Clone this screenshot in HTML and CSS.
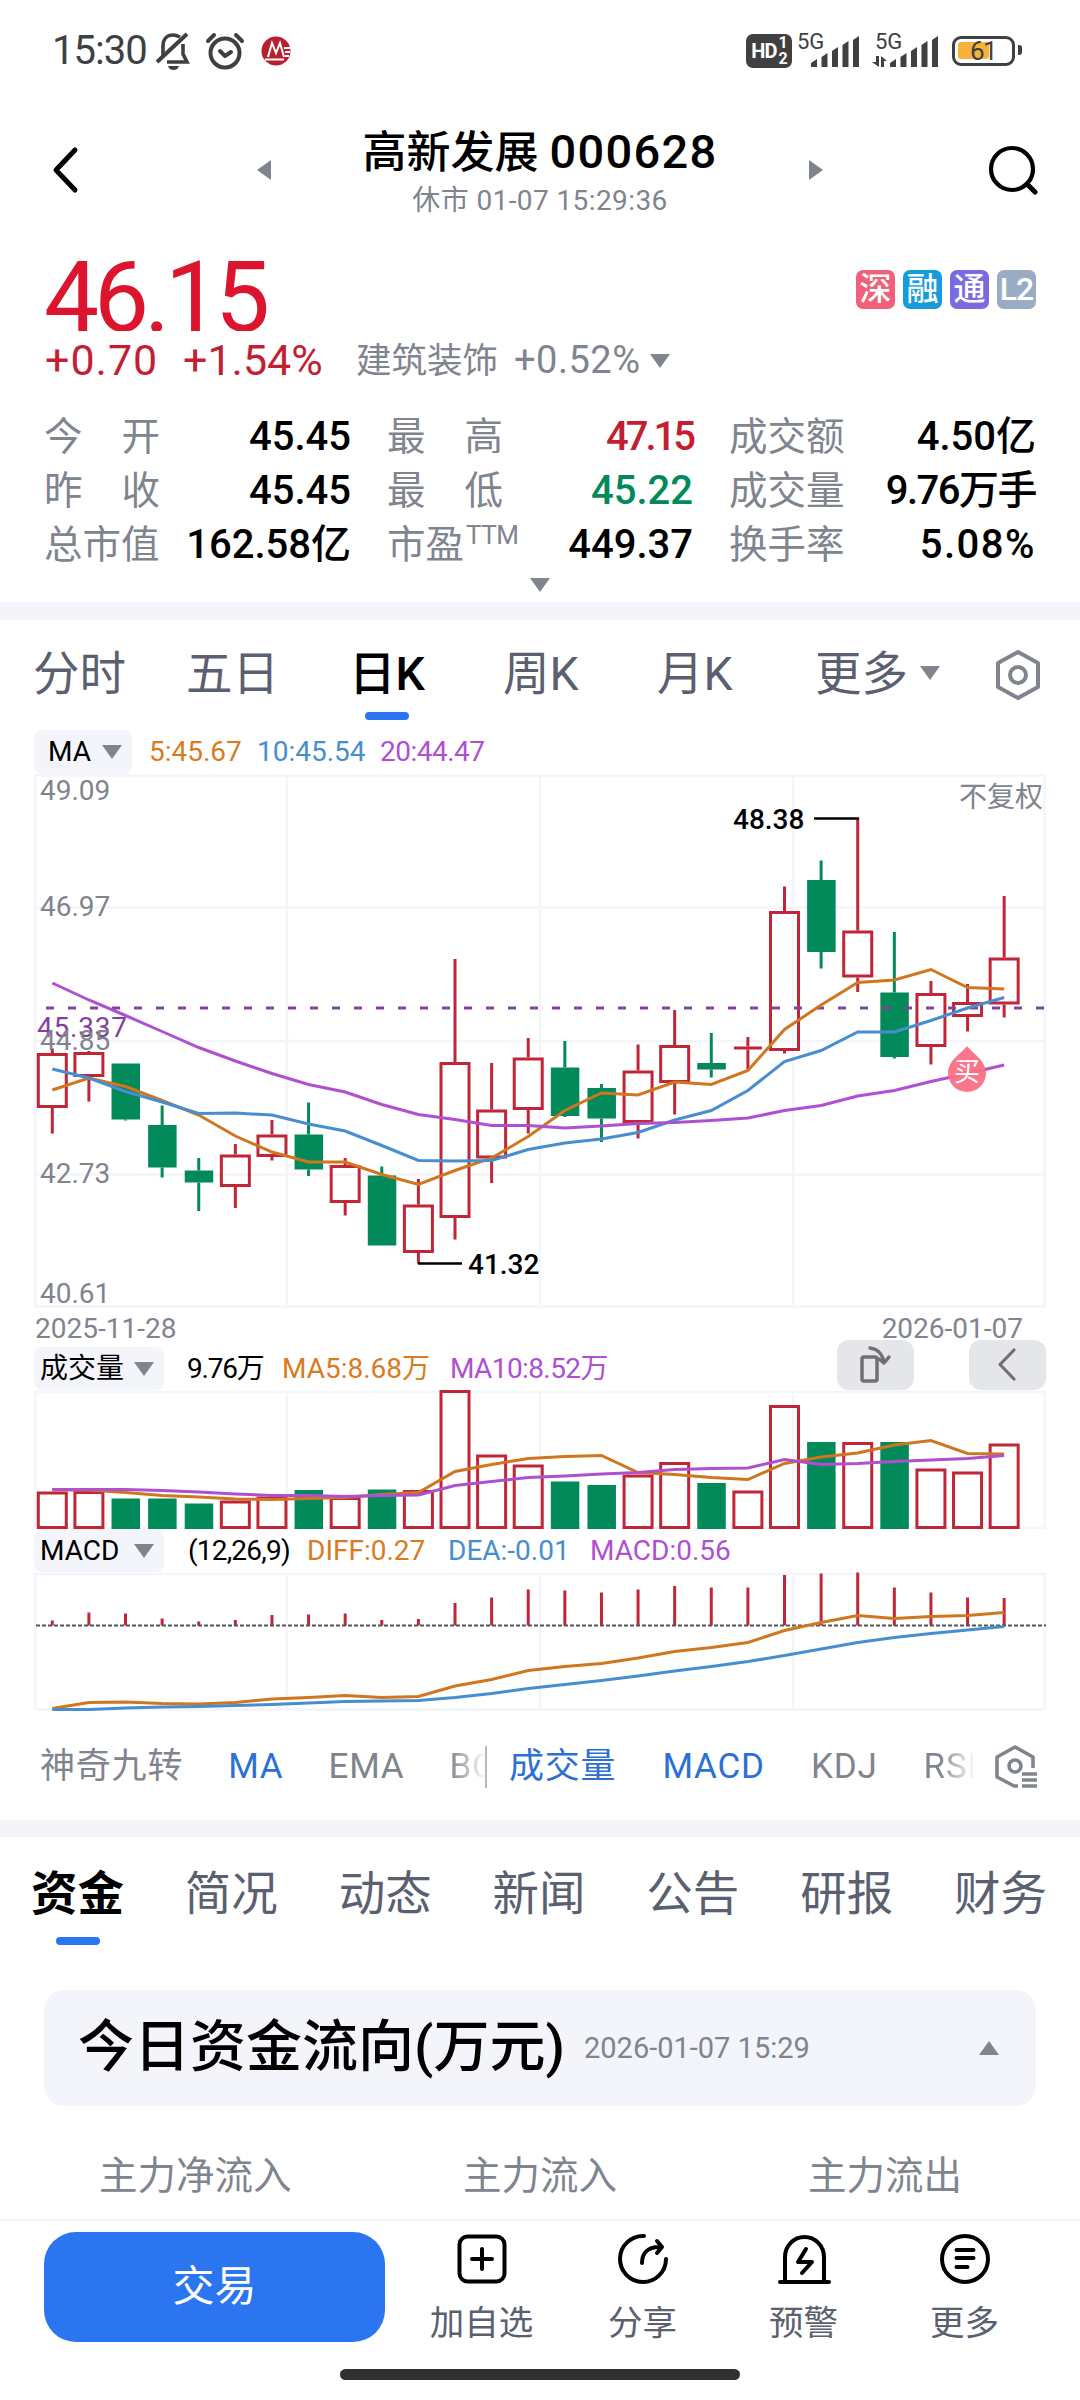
FILE: index.html
```html
<!DOCTYPE html>
<html lang="zh-CN">
<head>
    <meta charset="UTF-8">
    <meta name="viewport" content="width=device-width, initial-scale=1.0">
    <title>高新发展 000628</title>
    <link rel="stylesheet" href="styles.css">
</head>
<body>
    <div class="status-bar">
        <span class="clock">15:30</span>
        <svg class="ico-bell" width="36" height="40" viewBox="0 0 36 40" fill="none" stroke="#404040" stroke-width="3.6">
            <path d="M8 25V15C8 8 12 4 18 4c3 0 5 1 7 2M28 13v10l4 8H12"/>
            <path d="M2 31L32 3" stroke-width="4"/>
            <path d="M13 35h11c-1 3-3 4-5.500 4s-4.500-1-5.500-4z" fill="#404040" stroke="none"/>
        </svg>
        <svg class="ico-alarm" width="40" height="40" viewBox="0 0 40 40" fill="none" stroke="#404040" stroke-width="4" stroke-linecap="round" stroke-linejoin="round">
            <circle cx="20" cy="22" r="14.500"/>
            <path d="M15 20l5 5 6-4M3 10l6-6M37 10l-6-6"/>
        </svg>
        <svg class="ico-bank" width="32" height="32" viewBox="0 0 32 32">
            <circle cx="16" cy="16" r="14.500" fill="#b8202f"/>
            <path d="M8 22L12 8l4 10 4-10 4 14M5 24.500h19M24 13h6M25 17h5M25 21h4" fill="none" stroke="#fff" stroke-width="2"/>
        </svg>
        <div class="status-right">
            <div class="hd">HD<span>1<br>2</span></div>
            <div class="signal first"><span>5G</span>
                <svg width="62" height="34" viewBox="0 0 62 34" fill="#404040">
                    <path d="M14 33v-4l6-4v8zM24.500 33V23l6-4v14zM35 33V17l6-4v20zM45.500 33V11l6-4v26zM56 33V6l6-4v31z"/>
                </svg>
            </div>
            <div class="signal second"><span>5G</span>
                <svg width="66" height="34" viewBox="0 0 66 34" fill="#404040">
                    <path d="M18 33v-4l6-4v8zM28.500 33V23l6-4v14zM39 33V17l6-4v20zM49.500 33V11l6-4v26zM60 33V6l6-4v31z"/>
                    <path d="M0 28l7 5V22H4v6zM15 27l-6-5v11h3v-6z"/>
                </svg>
            </div>
            <div class="battery"><i></i><span>61</span></div>
        </div>
    </div>

    <div class="header">
        <svg width="30" height="50" viewBox="0 0 30 50" fill="none" stroke="#000" stroke-width="5" stroke-linecap="round" stroke-linejoin="round"><path d="M25 5L6 25l19 20"/></svg>
        <span class="tri-left"></span>
        <div class="title">
            <h1>高新发展 <b>000628</b></h1>
            <p>休市 01-07 15:29:36</p>
        </div>
        <span class="tri-right"></span>
        <svg width="50" height="50" viewBox="0 0 50 50" fill="none" stroke="#000" stroke-width="4.200" stroke-linecap="round"><circle cx="24" cy="24" r="21"/><path d="M39 39l8 8" stroke-width="5"/></svg>
    </div>

    <div class="quote">
        <div class="price-row">
            <div class="price">46.15</div>
            <div class="tags">
                <span class="tag-sz">深</span><span class="tag-rz">融</span><span class="tag-tong">通</span><span class="tag-l2">L2</span>
            </div>
        </div>
        <div class="change-row">
            <span class="chg">+0.70</span><span class="chg pct">+1.54%</span>
            <span class="sector">建筑装饰</span><span class="sector-chg">+0.52%</span><i class="tri-down"></i>
        </div>
        <div class="stats">
            <div><label><span>今</span><span>开</span></label><b>45.45</b></div>
            <div><label><span>最</span><span>高</span></label><b class="up">47.15</b></div>
            <div><label>成交额</label><b>4.50亿</b></div>
            <div><label><span>昨</span><span>收</span></label><b>45.45</b></div>
            <div><label><span>最</span><span>低</span></label><b class="down">45.22</b></div>
            <div><label>成交量</label><b class="tight">9.76万手</b></div>
            <div><label>总市值</label><b>162.58亿</b></div>
            <div><label class="pe">市盈<sup>TTM</sup></label><b>449.37</b></div>
            <div><label>换手率</label><b class="loose">5.08%</b></div>
        </div>
        <i class="tri-down expand"></i>
    </div>

    <div class="divider first-divider"></div>

    <div class="period-tabs">
        <span>分时</span><span>五日</span><span><em class="active">日K</em></span><span>周K</span><span>月K</span>
        <span>更多<i class="tri-down"></i></span>
        <svg width="48" height="52" viewBox="0 0 48 52" fill="none" stroke="#80848f" stroke-width="4" stroke-linejoin="round"><path d="M24 3L44 14v24L24 49 4 38V14z"/><circle cx="24" cy="26" r="8"/></svg>
    </div>

    <div class="legend ma-legend">
        <span class="chip">MA<i class="tri-down"></i></span>
        <span class="orange">5:45.67</span><span class="blue">10:45.54</span><span class="purple">20:44.47</span>
    </div>
    <svg id="kline" class="chart" width="1080" height="536" viewBox="0 0 1080 536"></svg>
    <div class="dates"><span>2025-11-28</span><span>2026-01-07</span></div>
    <div class="legend vol-legend">
        <span class="chip">成交量<i class="tri-down"></i></span>
        <span class="vol">9.76万</span><span class="orange">MA5:8.68万</span><span class="purple">MA10:8.52万</span>
        <div class="chart-tools">
            <button><svg width="34" height="40" viewBox="0 0 34 40" fill="none" stroke="#707070" stroke-width="3.500" stroke-linecap="round" stroke-linejoin="round"><rect x="3" y="12" width="15" height="24" rx="2"/><path d="M11 3c8 1 13 7 14 15M20 14l5 4 5-6"/></svg></button>
            <button><svg width="34" height="40" viewBox="0 0 34 40" fill="none" stroke="#707070" stroke-width="3.200" stroke-linecap="round" stroke-linejoin="round"><path d="M23 5L9 19.500 23 34"/></svg></button>
        </div>
    </div>
    <svg id="volume" class="chart" width="1080" height="139" viewBox="0 0 1080 139"></svg>
    <div class="legend macd-legend">
        <span class="chip">MACD<i class="tri-down"></i></span>
        <span class="params">(12,26,9)</span><span class="orange">DIFF:0.27</span><span class="blue">DEA:-0.01</span><span class="purple">MACD:0.56</span>
    </div>
    <svg id="macd" class="chart" width="1080" height="139" viewBox="0 0 1080 139"></svg>

    <div class="indicators">
        <div class="main-ind"><span>神奇九转</span><span class="on">MA</span><span>EMA</span><span>BOLL</span></div>
        <div class="sub-ind"><span class="on">成交量</span><span class="on">MACD</span><span>KDJ</span><span>RSI</span></div>
        <svg width="46" height="46" viewBox="0 0 46 46" fill="none" stroke="#80848f" stroke-width="3.600" stroke-linejoin="round"><path d="M40 24V13L22 3 4 13v20l17 9h4"/><circle cx="22" cy="22" r="6"/><path d="M29 30h15M29 36h15M29 42h15"/></svg>
    </div>

    <div class="divider"></div>

    <div class="info-tabs">
        <span class="active">资金</span><span>简况</span><span>动态</span><span>新闻</span><span>公告</span><span>研报</span><span>财务</span>
    </div>

    <div class="flow-card">
        <h2>今日资金流向(万元)</h2>
        <span>2026-01-07 15:29</span>
        <i class="tri-up"></i>
    </div>
    <div class="flow-cols">
        <span>主力净流入</span><span>主力流入</span><span>主力流出</span>
    </div>

    <div class="bottom-bar">
        <button class="trade">交易</button>
        <div class="action">
            <svg width="54" height="54" viewBox="0 0 54 54"><rect x="4.500" y="4.500" width="45" height="45" rx="8"/><path d="M27 17v20M17 27h20"/></svg>
            <span>加自选</span>
        </div>
        <div class="action">
            <svg width="54" height="54" viewBox="0 0 54 54"><path d="M28 4A23 23 0 1 0 50 27M26 31c0-9 5-16 17-16M41 9l5 6-5 6"/></svg>
            <span>分享</span>
        </div>
        <div class="action">
            <svg width="54" height="54" viewBox="0 0 54 54"><path d="M8 49V25a19.500 20 0 0 1 39 0v24M3 50h49M29 17l-8 13h14L25 41"/></svg>
            <span>预警</span>
        </div>
        <div class="action">
            <svg width="54" height="54" viewBox="0 0 54 54"><circle cx="27" cy="27" r="23"/><path d="M18.500 18h17M18.500 26h17M18.500 35h11"/></svg>
            <span>更多</span>
        </div>
    </div>
    <div class="home-bar"></div>

    <script src="script.js"></script>
</body>
</html>
```

FILE: styles.css
```css
* {
    box-sizing: border-box;
}
body {
    margin: 0;
    width: 1080px;
    height: 2400px;
    overflow: hidden;
    background: #fff;
    color: #000;
    font-family: Roboto, 'Noto Sans CJK SC', sans-serif;
    line-height: 1.2;
    display: flex;
    flex-direction: column;
}
body > * {
    flex-shrink: 0;
}
h1, h2, p {
    margin: 0;
}
em {
    font-style: normal;
}
svg {
    display: block;
    flex-shrink: 0;
}
button {
    border: none;
    padding: 0;
    font-family: inherit;
    line-height: inherit;
}

/* triangles */
.tri-down {
    display: inline-block;
    border-left: 10px solid transparent;
    border-right: 10px solid transparent;
    border-top: 14px solid #80848f;
}
.tri-up {
    border-left: 10px solid transparent;
    border-right: 10px solid transparent;
    border-bottom: 14px solid #80848f;
}
.tri-left {
    border-top: 10px solid transparent;
    border-bottom: 10px solid transparent;
    border-right: 14px solid #80848f;
}
.tri-right {
    border-top: 10px solid transparent;
    border-bottom: 10px solid transparent;
    border-left: 14px solid #80848f;
}

/* status bar */
.status-bar {
    height: 102px;
    padding: 0 59px 0 52px;
    display: flex;
    align-items: center;
    color: #404040;
}
.clock {
    width: 103px;
    font-size: 40px;
    letter-spacing: -1px;
}
.ico-alarm {
    margin-left: 14px;
}
.ico-bank {
    margin-left: 15px;
}
.status-right {
    margin-left: auto;
    display: flex;
    align-items: center;
}
.hd {
    width: 46px;
    height: 34px;
    border-radius: 7px;
    background: #404040;
    color: #fff;
    font-size: 20px;
    font-weight: bold;
    display: flex;
    align-items: center;
    justify-content: center;
    letter-spacing: -1px;
}
.hd span {
    font-size: 16px;
    line-height: 16px;
    margin-left: 2px;
}
.signal {
    position: relative;
    width: 62px;
    height: 34px;
}
.signal span {
    position: absolute;
    left: 0;
    top: -4px;
    font-size: 22px;
    line-height: 24px;
}
.first {
    margin-left: 5px;
}
.second {
    width: 66px;
    margin-left: 13px;
}
.second span {
    left: 3px;
}
.battery {
    position: relative;
    width: 63px;
    height: 30px;
    margin: 0 6px 0 14px;
    border: 3.5px solid #404040;
    border-radius: 9px;
    padding: 3px;
}
.battery i {
    display: block;
    width: 31px;
    height: 17px;
    border-radius: 3px;
    background: #f7b23c;
}
.battery span {
    position: absolute;
    left: 15px;
    top: -3px;
    font-size: 26px;
    line-height: 30px;
    letter-spacing: -1.5px;
}
.battery::after {
    content: '';
    position: absolute;
    right: -10px;
    top: 6px;
    width: 4px;
    height: 10px;
    border-radius: 0 3px 3px 0;
    background: #404040;
}

/* header */
.header {
    height: 142px;
    padding: 0 42px 6px 50px;
    display: flex;
    align-items: center;
}
.header .tri-left {
    margin-left: 177px;
}
.title {
    width: 538px;
    text-align: center;
    padding-top: 6px;
}
.title h1 {
    font-size: 44px;
    font-weight: 500;
    line-height: 54px;
    white-space: nowrap;
}
.title b {
    font-size: 47px;
    font-weight: 500;
    letter-spacing: 1.3px;
}
.title p {
    font-size: 28px;
    line-height: 42px;
    letter-spacing: 0.4px;
    color: #80848f;
}
.header svg:last-child {
    margin-left: auto;
}

/* quote */
.quote {
    height: 358px;
    padding: 0 44px;
    display: flex;
    flex-direction: column;
}
.price-row {
    height: 87px;
    display: flex;
    justify-content: space-between;
    overflow: hidden;
}
.price {
    font-size: 98px;
    line-height: 108px;
    color: #dc142d;
    letter-spacing: -5px;
}
.tags {
    display: flex;
    gap: 8px;
    padding-top: 26px;
}
.tags span {
    width: 39px;
    height: 39px;
    border-radius: 7px;
    color: #fff;
    font-size: 32px;
    font-weight: 500;
    line-height: 39px;
    text-align: center;
}
.tags .tag-sz {
    background: #f0607a;
}
.tags .tag-rz {
    background: #169bdd;
}
.tags .tag-tong {
    background: #7a6ce0;
}
.tags .tag-l2 {
    background: #9aabc4;
    letter-spacing: -1px;
}
.change-row {
    height: 60px;
    padding-left: 1px;
    display: flex;
    align-items: center;
    color: #80848f;
}
.chg {
    width: 138px;
    font-size: 43px;
    letter-spacing: 1px;
    color: #c41e33;
}
.chg.pct {
    width: 173px;
    letter-spacing: 0;
}
.sector {
    width: 158px;
    font-size: 35.5px;
}
.sector-chg {
    width: 136px;
    font-size: 38px;
    letter-spacing: 0.5px;
}
.stats {
    margin-top: 19px;
    display: grid;
    grid-template-columns: 307px 306px 307px;
    grid-auto-rows: 54px;
    column-gap: 36px;
}
.stats div {
    display: flex;
    align-items: center;
    justify-content: space-between;
}
.stats label {
    width: 116px;
    font-size: 38.5px;
    color: #80848f;
    display: flex;
    justify-content: space-between;
    white-space: nowrap;
}
.stats .pe {
    justify-content: flex-start;
}
.stats sup {
    font-size: 26px;
    line-height: 26px;
    letter-spacing: -0.5px;
    margin-left: 2px;
}
.stats b {
    font-size: 40px;
    font-weight: 500;
}
.stats .up {
    color: #c41e33;
    letter-spacing: -3px;
}
.stats .down {
    color: #028a5b;
}
.stats .tight {
    letter-spacing: -1.5px;
}
.stats .loose {
    letter-spacing: 1.5px;
}
.expand {
    align-self: center;
    margin-top: 6px;
}

.divider {
    height: 17px;
    background: #f4f5fa;
}
.first-divider {
    height: 18px;
}

/* period tabs */
.period-tabs {
    height: 110px;
    padding-left: 33px;
    display: grid;
    grid-template-columns: 153px 163px 154px 154px 158px 179px 48px;
    align-items: center;
    font-size: 46.5px;
    white-space: nowrap;
    color: #5a6070;
}
.period-tabs .tri-down {
    margin-left: 12px;
    vertical-align: 10px;
}
.active {
    position: relative;
    color: #000;
    font-weight: 500;
}
.active::after {
    content: '';
    position: absolute;
    left: 50%;
    bottom: -19px;
    width: 44px;
    height: 8px;
    margin-left: -22px;
    border-radius: 4px;
    background: #2b76f0;
}

/* charts */
.legend {
    display: grid;
    grid-template-rows: 100%;
    align-items: center;
    height: 43px;
    padding-left: 34px;
    font-size: 28px;
    white-space: nowrap;
}
.ma-legend {
    height: 44px;
    grid-template-columns: 115px 108px 123px 1fr;
}
.ma-legend .purple {
    letter-spacing: -0.5px;
}
.vol-legend {
    grid-template-columns: 153px 95px 168px 387px 209px;
}
.vol-legend .vol {
    letter-spacing: -1.2px;
}
.vol-legend .purple {
    letter-spacing: -0.6px;
}
.macd-legend {
    grid-template-columns: 154px 119px 141px 142px 1fr;
}
.macd-legend .params {
    letter-spacing: -0.8px;
}
.chip {
    height: 100%;
    padding: 0 10px 0 6px;
    background: #f4f5fa;
    border-radius: 8px;
    display: flex;
    align-items: center;
    justify-content: space-between;
}
.legend .chip {
    width: 130px;
}
.ma-legend .chip {
    width: 98px;
    padding-left: 14px;
}
.orange {
    color: #d97b1e;
}
.blue {
    color: #468ed0;
}
.purple {
    color: #b04fd2;
}
.chart-tools {
    display: flex;
    justify-content: space-between;
    align-self: end;
}
.chart-tools button {
    width: 77px;
    height: 50px;
    border-radius: 12px;
    background: #e5e6ea;
    display: flex;
    align-items: center;
    justify-content: center;
}
.dates {
    height: 37px;
    padding: 0 57px 0 35px;
    display: flex;
    justify-content: space-between;
    align-items: center;
    font-size: 28px;
    color: #80848f;
}
.chart {
    overflow: hidden;
}
.chart line, .chart rect, .chart polyline {
    fill: none;
    stroke-width: 3;
}
.chart .grid {
    stroke: #f4f5fa;
    stroke-width: 2.5;
}
.chart .rise {
    stroke: #c02538;
}
.chart .fall {
    stroke: #028a5b;
}
.chart rect.fall {
    fill: #028a5b;
    stroke: none;
}
.chart .l-orange {
    stroke: #d0761f;
}
.chart .l-blue {
    stroke: #468ed0;
}
.chart .l-purple {
    stroke: #ae50d0;
}
.chart text {
    font-size: 28px;
    fill: #80848f;
}
.chart .cost-line {
    stroke: #8442a0;
    stroke-dasharray: 8 14;
}
.chart .cost {
    fill: #8442a0;
    letter-spacing: 0.8px;
}
.chart .mark {
    fill: #000;
    font-weight: 500;
}
.chart .mark-line {
    stroke: #000;
    stroke-width: 2.5;
}
.chart .zero {
    stroke: #555;
    stroke-width: 2;
    stroke-dasharray: 4 2;
}
.chart .buy {
    fill: #fb6f84;
    opacity: 0.95;
}
.chart .buy-text {
    fill: #fff;
    font-size: 26px;
}

/* indicator row */
.indicators {
    height: 109px;
    padding: 3px 41px 0 40px;
    display: flex;
    align-items: center;
    font-size: 35px;
    letter-spacing: 0.8px;
    color: #80848f;
}
.indicators div {
    display: flex;
    height: 42px;
    align-items: center;
    overflow: hidden;
    white-space: nowrap;
}
.indicators .on {
    color: #2c70d6;
}
.main-ind {
    width: 447px;
    gap: 45px;
    border-right: 2px solid #b5b9c2;
}
.main-ind span:last-child {
    background: linear-gradient(90deg, #80848f, #fff 36px);
    -webkit-background-clip: text;
    color: transparent;
}
.sub-ind {
    width: 464px;
    margin-left: 22px;
    gap: 46px;
}
.sub-ind span:last-child {
    background: linear-gradient(90deg, #80848f 15px, #fff 52px);
    -webkit-background-clip: text;
    color: transparent;
}
.indicators svg {
    margin-left: auto;
}

/* info tabs */
.info-tabs {
    height: 153px;
    padding: 23px 33px 0 31px;
    display: flex;
    justify-content: space-between;
    font-size: 46.5px;
    line-height: 68px;
    color: #5a6070;
}
.info-tabs .active {
    font-weight: bold;
    height: 68px;
}
.info-tabs .active::after {
    bottom: -17px;
}

/* money flow */
.flow-card {
    height: 116px;
    margin: 0 44px;
    padding: 0 37px 0 34px;
    border-radius: 20px;
    background: #f4f5fa;
    display: flex;
    align-items: center;
}
.flow-card h2 {
    font-size: 56px;
    font-weight: 500;
    width: 506px;
    white-space: nowrap;
}
.flow-card span {
    font-size: 29px;
    color: #80848f;
}
.flow-card .tri-up {
    margin-left: auto;
}
.flow-cols {
    height: 113px;
    padding-left: 99px;
    display: grid;
    grid-template-columns: 364px 345px 1fr;
    font-size: 38.5px;
    line-height: 140px;
    color: #80848f;
}

/* bottom bar */
.bottom-bar {
    height: 150px;
    padding: 11px 34px 0 44px;
    border-top: 2px solid #f4f4f6;
    display: flex;
}
.trade {
    width: 341px;
    height: 110px;
    margin-right: 16px;
    border-radius: 32px;
    background: #2b76f0;
    color: #fff;
    font-size: 42px;
}
.action {
    width: 161px;
    display: flex;
    flex-direction: column;
    align-items: center;
    font-size: 34.5px;
    line-height: 46px;
    color: #5a6070;
}
.action svg {
    margin-bottom: 14px;
    fill: none;
    stroke: #000;
    stroke-width: 4;
    stroke-linecap: round;
    stroke-linejoin: round;
}
.home-bar {
    width: 400px;
    height: 11px;
    margin-left: 340px;
    border-radius: 6px;
    background: #303030;
}
```

FILE: script.js
```js
const START = 52.3;
const STEP = 36.61;
const BODY = 28;

// [direction, body top, body bottom, high, low, volume top, macd top]
const days = [
    ['rise', 279, 334, 274.5, 359.5, 101.5, 48.5],
    ['rise', 278, 303, 277, 327.5, 101, 40.5],
    ['fall', 289.5, 345.5, 289.5, 346.5, 108.5, 41.5],
    ['fall', 351, 393.5, 331.5, 403.5, 108.5, 46.5],
    ['fall', 396.5, 408.5, 384, 437, 113.5, 49.5],
    ['rise', 380.5, 413, 370, 434, 110.5, 48],
    ['rise', 360.5, 383, 346, 386.5, 106.5, 43],
    ['fall', 360.5, 395.5, 328.5, 402, 100, 42.5],
    ['rise', 391, 429, 384, 441.5, 107, 41.5],
    ['fall', 401.5, 471.5, 392.5, 471.5, 99.5, 48],
    ['rise', 430.5, 479, 405, 489.5, 100, 47],
    ['rise', 288, 444, 185, 465.5, 0, 31],
    ['rise', 335.5, 384.5, 289, 409, 64.5, 25.5],
    ['rise', 283.5, 336, 264, 359.5, 74.5, 17.5],
    ['fall', 293.5, 342, 267, 343, 91.5, 18.5],
    ['fall', 314, 344.5, 310, 368, 95, 20.5],
    ['rise', 296.5, 349, 270.5, 364.5, 84.5, 17.5],
    ['rise', 271, 309, 236, 340.5, 72, 14],
    ['fall', 289, 295.5, 259, 303.5, 93, 15.5],
    ['rise', 272.5, 275.5, 263, 295, 100.5, 15.5],
    ['rise', 137, 277, 112.5, 279.5, 15, 3],
    ['fall', 106, 178, 86.5, 194.5, 52, 1.5],
    ['rise', 156.5, 203.5, 44, 218, 52, 0.5],
    ['fall', 218.5, 283, 158, 284.5, 52, 15.5],
    ['rise', 219, 273, 207, 290.5, 78.5, 20.5],
    ['rise', 228, 243, 210, 257.5, 81.5, 25.5],
    ['rise', 183.5, 230.5, 122, 243.5, 53.5, 26]
];

const priceMa = {
    orange: [316, 304, 312.5, 326.5, 341, 362, 378, 388, 388, 400.5, 410.5, 396.5, 384, 362.5, 336.5, 319, 321, 308, 310.5, 296.5, 255.5, 231, 208.5, 206, 195.5, 213.5, 215],
    blue: [295, 304, 317.5, 328, 339.5, 339, 341, 350, 357, 371.5, 386.5, 387, 386.5, 375.5, 369, 365, 358.5, 346, 336.5, 316.5, 287.5, 276.5, 258, 258, 246.5, 234, 223.5],
    purple: [209, 226, 241.5, 257.5, 273.5, 287, 299.5, 310.5, 318, 330.5, 340.5, 345.5, 351.5, 351.5, 354, 352, 349.5, 348.5, 346.5, 344, 336.5, 331.5, 322, 316.5, 307.5, 299.5, 291]
};
const volumeMa = {
    orange: [100, 100, 102.5, 105.5, 107, 109, 109.5, 108.5, 107.5, 104.5, 102.5, 81.5, 74.5, 68.5, 66.5, 65.5, 82.5, 84.5, 87.5, 89.5, 73.5, 67, 63, 55, 50.5, 63.5, 64],
    purple: [99.5, 99.5, 99.5, 100.5, 102, 104, 105.5, 105.5, 106.5, 105.5, 105, 95.5, 91.5, 87.5, 86, 84, 82.5, 79.5, 78.5, 78, 69.5, 74.5, 73.5, 71.5, 70, 68.5, 65.5]
};
const macdLines = {
    orange: [136.5, 130.5, 130, 131.5, 132, 130.5, 127, 125.5, 123.5, 125.5, 124.5, 114, 107.5, 98.5, 94.5, 91.5, 86, 79.5, 75.5, 70.5, 58.5, 50.5, 43.5, 46.5, 44.5, 43.5, 40.5],
    blue: [137.5, 137.5, 136, 135, 134.5, 133.5, 132.5, 131, 129.5, 129, 128.5, 125.5, 121.5, 116.5, 112.5, 108.5, 104, 99, 94.5, 89.5, 83.5, 77, 70.5, 65.5, 61.5, 58, 54.5]
};

const xAt = i => START + i * STEP;

function line(x1, y1, x2, y2, cls) {
    return `<line x1="${x1}" y1="${y1}" x2="${x2}" y2="${y2}" class="${cls}"/>`;
}

function label(x, y, text, cls = '') {
    return `<text x="${x}" y="${y}" class="${cls}">${text}</text>`;
}

function grid(bottom, rows) {
    let out = '';
    [35.5, 287, 540, 793, 1044.5].forEach(x => out += line(x, 1, x, bottom, 'grid'));
    rows.forEach(y => out += line(34.5, y, 1045.5, y, 'grid'));
    return out;
}

// hollow bodies for rising days, filled for falling ones
function body(x, top, bottom, dir) {
    if (bottom - top <= 3) {
        return line(x - BODY / 2, top + 1.5, x + BODY / 2, top + 1.5, dir);
    }
    if (dir === 'rise') {
        return `<rect x="${x - BODY / 2}" y="${top + 1.5}" width="${BODY}" height="${bottom - top - 3}" class="rise"/>`;
    }
    return `<rect x="${x - BODY / 2}" y="${top}" width="${BODY + 0.5}" height="${bottom - top}" class="fall"/>`;
}

function curves(lines) {
    return Object.entries(lines).map(([color, ys]) => {
        const points = ys.map((y, i) => `${xAt(i)},${y}`).join(' ');
        return `<polyline points="${points}" class="l-${color}"/>`;
    }).join('');
}

function drawKline() {
    let out = grid(533, [1.5, 133.5, 267, 400.5, 532.5]);
    days.forEach(([dir, top, bottom, high, low], i) => {
        const x = xAt(i);
        out += line(x, high, x, top, dir) + line(x, bottom, x, low, dir);
        out += body(x, top, bottom, dir);
    });
    out += line(46, 234, 1044, 234, 'cost-line');
    out += curves(priceMa);
    out += label(37, 263, '45.337', 'cost');
    out += label(40, 25.5, '49.09') + label(40, 141.5, '46.97') + label(40, 275.5, '44.85');
    out += label(40, 409, '42.73') + label(40, 528.5, '40.61') + label(959, 32.5, '不复权');
    out += line(814, 44.5, 859, 44.5, 'mark-line') + label(733, 54.5, '48.38', 'mark');
    out += line(418, 489.5, 462, 489.5, 'mark-line') + label(468, 500, '41.32', 'mark');
    out += '<path d="M967 272c4 6 19 14 19 27a19 19 0 0 1-38 0c0-13 15-21 19-27z" class="buy"/>';
    out += label(954, 307, '买', 'buy-text');
    document.getElementById('kline').innerHTML = out;
}

function drawVolume() {
    let out = grid(139, [2, 138]);
    days.forEach((d, i) => out += body(xAt(i), d[5], 139, d[0]));
    document.getElementById('volume').innerHTML = out + curves(volumeMa);
}

function drawMacd() {
    let out = grid(138, [2, 137.5]);
    days.forEach((d, i) => out += line(xAt(i), d[6], xAt(i), 53.5, 'rise'));
    out += line(36, 53.5, 1046, 53.5, 'zero');
    document.getElementById('macd').innerHTML = out + curves(macdLines);
}

drawKline();
drawVolume();
drawMacd();
```
